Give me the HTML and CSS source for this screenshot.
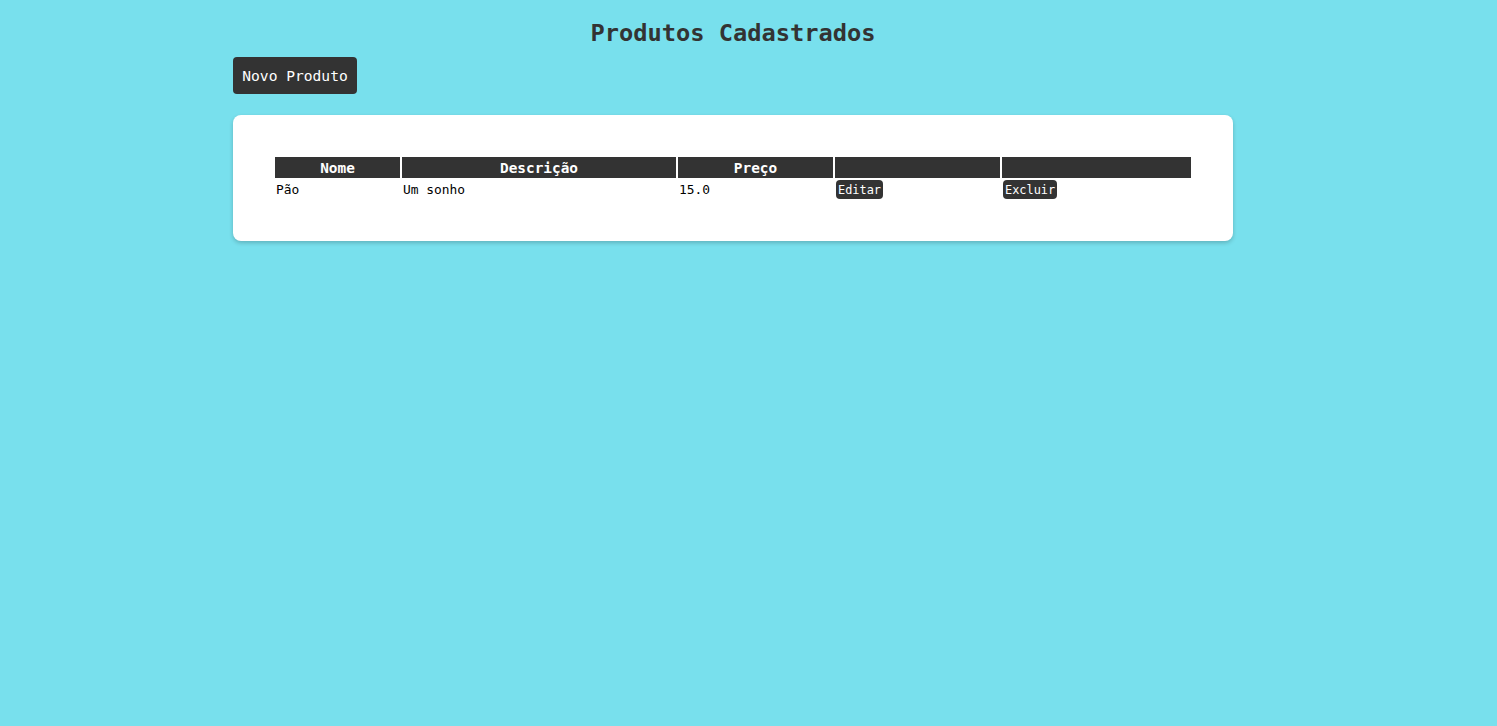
FILE: index.html
```html
<!DOCTYPE html>
<html lang="pt-BR">
<head>
<meta charset="utf-8">
<title>Produtos Cadastrados</title>
<link rel="stylesheet" href="styles.css">
</head>
<body>
<div class="page">
  <h1 class="title">Produtos Cadastrados</h1>
  <button class="btn-new">Novo Produto</button>
  <div class="card">
    <table class="products">
      <colgroup>
        <col class="c-nome"><col class="c-desc"><col class="c-preco"><col class="c-edit"><col class="c-del">
      </colgroup>
      <thead>
        <tr><th>Nome</th><th>Descrição</th><th>Preço</th><th></th><th></th></tr>
      </thead>
      <tbody>
        <tr>
          <td>Pão</td>
          <td>Um sonho</td>
          <td>15.0</td>
          <td><button class="btn-small">Editar</button></td>
          <td><button class="btn-small">Excluir</button></td>
        </tr>
      </tbody>
    </table>
  </div>
</div>
</body>
</html>
```
FILE: styles.css
```css
html, body {
  margin: 0;
  padding: 0;
}
body {
  background: #78e0ed;
  font-family: "DejaVu Sans Mono", "Liberation Mono", monospace;
  color: #000;
  padding-right: 31px;
  min-height: 726px;
  box-sizing: border-box;
}
.page {
  width: 1000px;
  margin: 0 auto;
  display: flex;
  flex-direction: column;
  align-items: flex-start;
}
.title {
  align-self: stretch;
  text-align: center;
  margin: 19px 0 10px;
  font-size: 23.7px;
  line-height: 28px;
  font-weight: bold;
  color: #333;
}
.btn-new {
  font-family: inherit;
  font-size: 14.6px;
  line-height: 17px;
  color: #fff;
  background: #333;
  border: none;
  border-radius: 4px;
  padding: 10px 9px;
  width: 124px;
  height: 37px;
  cursor: pointer;
}
.card {
  align-self: stretch;
  margin-top: 21px;
  background: #fff;
  border-radius: 8px;
  box-shadow: 0 2px 4px rgba(0, 0, 0, 0.2);
  padding: 40px;
}
.products {
  width: 100%;
  table-layout: fixed;
  border-collapse: separate;
  border-spacing: 2px;
}
.c-nome { width: 125px; }
.c-desc { width: 274px; }
.c-preco { width: 155px; }
.c-edit { width: 165px; }
.c-del { width: 189px; }
.products th {
  background: #333;
  color: #fff;
  font-size: 14.4px;
  font-weight: bold;
  line-height: 17px;
  padding: 3px 0 1px;
  height: 21px;
  box-sizing: border-box;
  text-align: center;
}
.products td {
  font-size: 12.9px;
  line-height: 19px;
  height: 19px;
  padding: 0 1px;
  text-align: left;
  vertical-align: middle;
  color: #000;
}
.btn-small {
  display: inline-block;
  vertical-align: top;
  font-family: inherit;
  font-size: 11.9px;
  line-height: 20px;
  height: 19px;
  padding: 0 2px;
  color: #fff;
  background: #333;
  border: none;
  border-radius: 4px;
  cursor: pointer;
}
```
